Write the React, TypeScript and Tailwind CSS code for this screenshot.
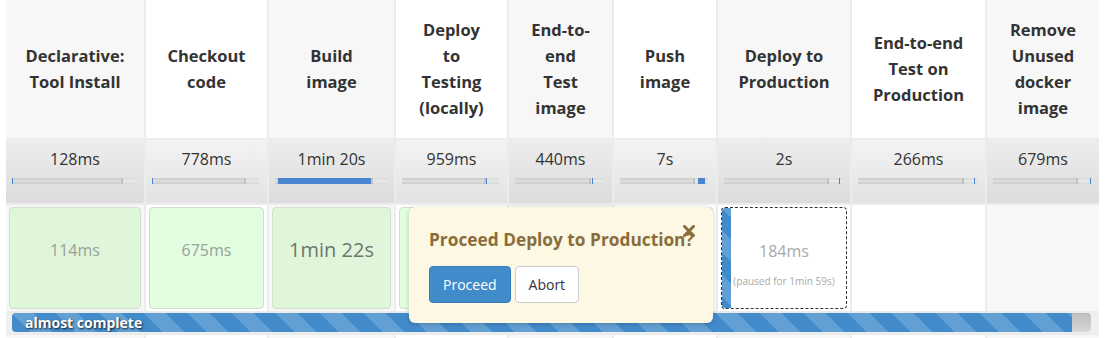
import React from "react";

type Col = {
  lines: string[];
  dur: string;
  blueLeft: number;
  blueWidth: number;
};

const cols: Col[] = [
  { lines: ["Declarative:", "Tool Install"], dur: "128ms", blueLeft: 0, blueWidth: 1 },
  { lines: ["Checkout", "code"], dur: "778ms", blueLeft: 0, blueWidth: 1 },
  { lines: ["Build", "image"], dur: "1min 20s", blueLeft: 3, blueWidth: 93 },
  { lines: ["Deploy", "to", "Testing", "(locally)"], dur: "959ms", blueLeft: 84, blueWidth: 1 },
  { lines: ["End-to-", "end", "Test", "image"], dur: "440ms", blueLeft: 77, blueWidth: 1 },
  { lines: ["Push", "image"], dur: "7s", blueLeft: 78, blueWidth: 7 },
  { lines: ["Deploy to", "Production"], dur: "2s", blueLeft: 115, blueWidth: 1 },
  { lines: ["End-to-end", "Test on", "Production"], dur: "266ms", blueLeft: 116, blueWidth: 1 },
  { lines: ["Remove", "Unused", "docker", "image"], dur: "679ms", blueLeft: 97, blueWidth: 1 },
];

const headerBg = (i: number) => (i % 2 === 0 ? "bg-[#f7f7f7]" : "bg-white");
const durBg = (i: number) =>
  i % 2 === 0
    ? "bg-[linear-gradient(#ededed,#dcdcdc)]"
    : "bg-[linear-gradient(#f3f3f3,#e3e3e3)]";

function DurBar({ c }: { c: Col }) {
  return (
    <div className="relative ml-[6px] mr-[8px] h-[6px] bg-[linear-gradient(#cbcbcb,#dedede,#cbcbcb)]">
      <div className="absolute right-0 top-0 h-[6px] w-[15px] border-l-2 border-[#c2c2c2] bg-[linear-gradient(#d8d8d8,#e9e9e9,#d8d8d8)]" />
      <div
        className="absolute top-0 h-[6px] bg-[#4a86cf]"
        style={{ left: c.blueLeft, width: c.blueWidth }}
      />
    </div>
  );
}

function GreenCell({ text, alt, big }: { text?: string; alt?: boolean; big?: boolean }) {
  return (
    <div
      className={`flex h-full items-center justify-center rounded-[4px] border border-[#cfe0cb] pb-[16px] ${
        alt ? "bg-[#e3fde0]" : "bg-[#dff6db]"
      }`}
    >
      {text && (
        <span className={big ? "text-[20px] text-[#6e756d]" : "text-[16px] text-[#9aa099]"}>{text}</span>
      )}
    </div>
  );
}

const stripes =
  "bg-[linear-gradient(45deg,rgba(255,255,255,.17)_25%,transparent_25%,transparent_50%,rgba(255,255,255,.17)_50%,rgba(255,255,255,.17)_75%,transparent_75%,transparent)] bg-size-[44px_44px]";

export default function App() {
  return (
    <div className="relative h-[338px] w-[1107px] overflow-hidden bg-white pl-[6px] font-['Open_Sans','Noto_Sans',sans-serif] text-[#333]">
      <div className="grid w-[1093px] grid-cols-[138px_121px_125px_111px_103px_102px_132px_133px_112px] grid-rows-[138px_63px_106px_20px_20px] gap-[2px] bg-[#ececec]">
        {/* header row */}
        {cols.map((c, i) => (
          <div
            key={"h" + i}
            className={`flex items-center justify-center text-center text-[16.5px] font-bold leading-[26px] ${headerBg(i)}`}
          >
            <div>
              {c.lines.map((l, j) => (
                <div key={j}>{l}</div>
              ))}
            </div>
          </div>
        ))}
        {/* duration row */}
        {cols.map((c, i) => (
          <div key={"d" + i} className={`flex flex-col pt-[8px] ${durBg(i)}`}>
            <div className="text-center text-[16px] leading-[22px] text-[#333]">{c.dur}</div>
            <div className="mt-[8px]">
              <DurBar c={c} />
            </div>
          </div>
        ))}
        {/* cell row */}
        <div className={`px-[3px] py-[2px] ${headerBg(0)}`}>
          <GreenCell text="114ms" />
        </div>
        <div className={`px-[3px] py-[2px] ${headerBg(1)}`}>
          <GreenCell text="675ms" alt />
        </div>
        <div className={`px-[3px] py-[2px] ${headerBg(2)}`}>
          <GreenCell text="1min 22s" big />
        </div>
        <div className={`px-[3px] py-[2px] ${headerBg(3)}`}>
          <GreenCell alt />
        </div>
        <div className={`px-[3px] py-[2px] ${headerBg(4)}`}>
          <GreenCell />
        </div>
        <div className={`px-[3px] py-[2px] ${headerBg(5)}`}>
          <GreenCell alt />
        </div>
        <div className="bg-white px-[3px] py-[2px]">
          <div className="relative flex h-full overflow-hidden rounded-[4px] border border-dashed border-[#333]">
            <div className={`w-[9px] shrink-0 bg-[#428bca] ${stripes}`} />
            <div className="flex flex-1 flex-col items-center justify-center pr-[9px] pt-[12px]">
              <span className="text-[16px] leading-[22px] text-[#a9a9a9]">184ms</span>
              <span className="mt-[12px] text-[10px] leading-[14px] text-[#a9a9a9]">(paused for 1min 59s)</span>
            </div>
          </div>
        </div>
        <div className="bg-white" />
        <div className="bg-[#f7f7f7]" />
        {/* progress row */}
        <div className="col-span-9 bg-[#f0f0f0] pl-[6px] pr-[8px]">
          <div className="flex h-[19px] overflow-hidden rounded-[4px] bg-[linear-gradient(#bdbdbd,#d8d8d8)]">
            <div
              className={`flex h-full w-[1060px] items-center bg-[#428bca] pl-[13px] text-[14px] font-bold text-white [text-shadow:1px_1px_2px_rgba(0,0,0,0.8)] ${stripes}`}
            >
              almost complete
            </div>
          </div>
        </div>
        {/* next row (cut) */}
        {cols.map((_, i) => (
          <div key={"n" + i} className={headerBg(i)} />
        ))}
      </div>

      {/* popover */}
      <div className="absolute left-[409px] top-[207px] h-[116px] w-[304px] rounded-[6px] bg-[#fcf8e3] pl-[20px] pt-[20px] shadow-[0_1px_5px_rgba(0,0,0,0.2)]">
        <div className="whitespace-nowrap text-[17.3px] font-bold leading-[26px] text-[#8a6d3b]">
          Proceed Deploy to Production?
        </div>
        <svg
          className="absolute left-[274px] top-[18px]"
          width="12"
          height="12"
          viewBox="0 0 12 12"
        >
          <path d="M1.5 1.5 L10.5 10.5 M10.5 1.5 L1.5 10.5" stroke="#8a6d3b" strokeWidth="3" strokeLinecap="square" />
        </svg>
        <div className="mt-[13px] flex gap-[4px]">
          <button className="h-[37px] rounded-[4px] border border-[#357ebd] bg-[#428bca] px-[13px] text-[14px] text-white">
            Proceed
          </button>
          <button className="h-[37px] rounded-[4px] border border-[#ccc] bg-white px-[13px] text-[14px] text-[#333]">
            Abort
          </button>
        </div>
      </div>
    </div>
  );
}
